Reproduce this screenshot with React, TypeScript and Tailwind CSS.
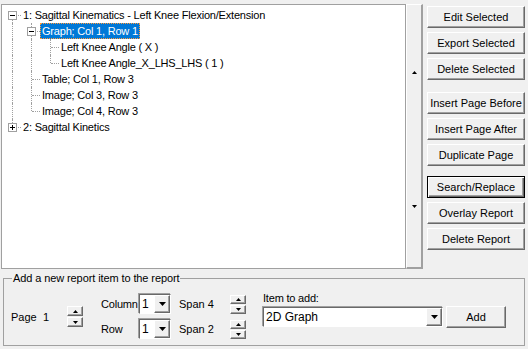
import React from 'react';

type Guide = 'full' | 'top' | 'bottom';

const treeRows: { level: number; text: string; guides: Guide[]; box?: 'minus' | 'plus'; selected?: boolean }[] = [
  { level: 0, text: '1: Sagittal Kinematics - Left Knee Flexion/Extension', guides: ['bottom'], box: 'minus' },
  { level: 1, text: 'Graph; Col 1, Row 1', guides: ['full', 'full'], box: 'minus', selected: true },
  { level: 2, text: 'Left Knee Angle ( X )', guides: ['full', 'full', 'full'] },
  { level: 2, text: 'Left Knee Angle_X_LHS_LHS ( 1 )', guides: ['full', 'full', 'top'] },
  { level: 1, text: 'Table; Col 1, Row 3', guides: ['full', 'full'] },
  { level: 1, text: 'Image; Col 3, Row 3', guides: ['full', 'full'] },
  { level: 1, text: 'Image; Col 4, Row 3', guides: ['full', 'top'] },
  { level: 0, text: '2: Sagittal Kinetics', guides: ['top'], box: 'plus' },
];

const raised =
  'bg-[#f0f0f0] border border-t-white border-l-white border-r-[#696969] border-b-[#696969] shadow-[inset_-1px_-1px_0_#a0a0a0]';

const ArrowUp = ({ w = 5, h = 3 }: { w?: number; h?: number }) => (
  <svg width={w} height={h} viewBox={`0 0 ${w} ${h}`}>
    <polygon points={`0,${h} ${w},${h} ${w / 2},0`} fill="#000" />
  </svg>
);

const ArrowDown = ({ w = 5, h = 3 }: { w?: number; h?: number }) => (
  <svg width={w} height={h} viewBox={`0 0 ${w} ${h}`}>
    <polygon points={`0,0 ${w},0 ${w / 2},${h}`} fill="#000" />
  </svg>
);

const TreeCell = ({ guide, own, box }: { guide: Guide; own: boolean; box?: 'minus' | 'plus' }) => (
  <div className="relative w-[19px] h-[16px] shrink-0">
    <span
      className={`absolute left-[9px] border-l border-dotted border-[#a0a0a0] ${
        guide === 'full' ? 'top-0 bottom-0' : guide === 'top' ? 'top-0 h-[8px]' : 'top-[8px] bottom-0'
      }`}
    />
    {own && <span className="absolute left-[10px] right-[1px] top-[8px] border-t border-dotted border-[#a0a0a0]" />}
    {own && box && (
      <span className="absolute left-[5px] top-[4px] w-[9px] h-[9px] bg-white border border-[#a0a0a0] flex items-center justify-center">
        <span className="relative w-[5px] h-[1px] bg-black">
          {box === 'plus' && <span className="absolute left-[2px] -top-[2px] w-[1px] h-[5px] bg-black" />}
        </span>
      </span>
    )}
  </div>
);

const Button = ({ label, isDefault }: { label: string; isDefault?: boolean }) => (
  <div
    className={`h-[22px] w-[98px] flex items-center justify-center text-[11px] ${
      isDefault
        ? 'bg-[#f0f0f0] border border-black shadow-[inset_1px_1px_0_#fff,inset_-1px_-1px_0_#696969,inset_-2px_-2px_0_#a0a0a0]'
        : raised
    }`}
  >
    {label}
  </div>
);

const Spinner = ({ h = 9 }: { h?: number }) => (
  <div className="flex flex-col gap-[1px] w-[16px]">
    <div className={`${raised} flex items-center justify-center`} style={{ height: h }}>
      <ArrowUp w={5} h={3} />
    </div>
    <div className={`${raised} flex items-center justify-center`} style={{ height: h }}>
      <ArrowDown w={5} h={3} />
    </div>
  </div>
);

const Combo = ({ value, width }: { value: string; width: string }) => (
  <div
    className={`${width} h-[20px] bg-white flex border border-t-[#696969] border-l-[#696969] border-b-white border-r-white shadow-[-1px_-1px_0_#a0a0a0]`}
  >
    <div className="flex-1 pl-[2px] text-[12px] leading-[18px]">{value}</div>
    <div className={`${raised} w-[16px] h-full flex items-center justify-center`}>
      <ArrowDown w={7} h={4} />
    </div>
  </div>
);

export default function App() {
  return (
    <div
      className="w-[528px] h-[349px] bg-[#f0f0f0] text-black overflow-hidden select-none"
      style={{ fontFamily: '"Liberation Sans", Arial, sans-serif' }}
    >
      <div className="flex pt-[4px] pl-[1px]">
        {/* Tree */}
        <div className="w-[405px] h-[265px] bg-white border border-[#a0a0a0] pt-[2px] pl-[1px]">
          {treeRows.map((row, i) => (
            <div key={i} className="flex h-[16px]">
              {row.guides.map((g, c) => (
                <TreeCell key={c} guide={g} own={c === row.level} box={c === row.level ? row.box : undefined} />
              ))}
              {row.selected ? (
                <span className="ml-[-1px] h-[16px] px-[1px] bg-[#0078d7] text-white border border-dotted border-[#ff9a3c] text-[11px] leading-[14px] tracking-[-0.2px] whitespace-nowrap">
                  {row.text}
                </span>
              ) : (
                <span className="ml-[1px] text-[11px] leading-[16px] tracking-[-0.2px] whitespace-nowrap">{row.text}</span>
              )}
            </div>
          ))}
        </div>

        {/* Scroll panel */}
        <div className="w-[17px] h-[265px] border-l border-t border-l-white border-t-white border-r-[2px] border-b-[2px] border-r-[#a0a0a0] border-b-[#a0a0a0] flex flex-col items-center pt-[66px]">
          <ArrowUp />
          <div className="h-[131px]" />
          <ArrowDown />
        </div>

        {/* Buttons */}
        <div className="ml-[4px] flex flex-col pt-[2px]">
          <div className="flex flex-col gap-[4px]">
            <Button label="Edit Selected" />
            <Button label="Export Selected" />
            <Button label="Delete Selected" />
          </div>
          <div className="flex flex-col gap-[4px] mt-[12px]">
            <Button label="Insert Page Before" />
            <Button label="Insert Page After" />
            <Button label="Duplicate Page" />
          </div>
          <div className="flex flex-col gap-[4px] mt-[10px]">
            <Button label="Search/Replace" isDefault />
            <Button label="Overlay Report" />
            <Button label="Delete Report" />
          </div>
        </div>
      </div>

      {/* Group box */}
      <fieldset className="ml-[3px] w-[522px] h-[75px] mt-[2px] border border-[#a0a0a0] p-0 m-0">
        <legend className="ml-[8px] px-[1px] text-[11px] leading-[14px] tracking-[-0.1px]">
          Add a new report item to the report
        </legend>
        <div className="flex pl-[7px] text-[11px]">
          <div className="flex items-center mt-[21px] h-[21px]">
            <span className="w-[32px] pt-[2px]">Page</span>
            <span className="w-[24px] pt-[2px]">1</span>
            <Spinner h={10} />
          </div>

          <div className="ml-[18px] mt-[9px] flex flex-col gap-[5px]">
            {[
              ['Column', '1', 'Span 4'],
              ['Row', '1', 'Span 2'],
            ].map(([label, val, span]) => (
              <div key={label} className="flex items-center h-[20px]">
                <span className="w-[38px] tracking-[-0.2px] whitespace-nowrap">{label}</span>
                <Combo value={val} width="w-[32px]" />
                <span className="ml-[8px] w-[51px]">{span}</span>
                <Spinner h={9} />
              </div>
            ))}
          </div>

          <div className="ml-[17px] mt-[6px] flex flex-col">
            <span className="h-[14px] leading-[14px] tracking-[-0.2px]">Item to add:</span>
            <div className="flex items-center mt-[1px]">
              <Combo value="2D Graph" width="w-[180px]" />
              <div className={`${raised} ml-[3px] w-[60px] h-[22px] flex items-center justify-center`}>Add</div>
            </div>
          </div>
        </div>
      </fieldset>
    </div>
  );
}
